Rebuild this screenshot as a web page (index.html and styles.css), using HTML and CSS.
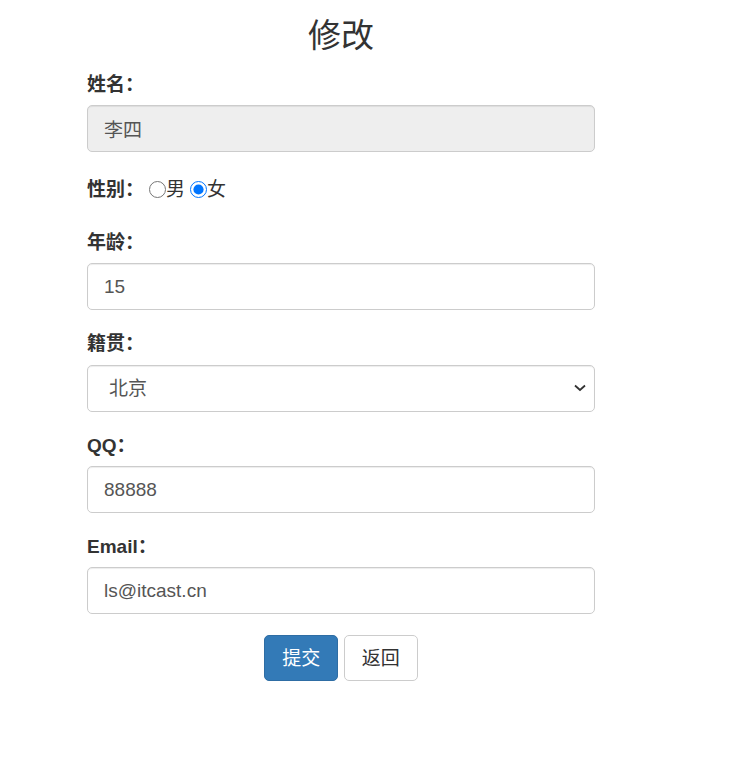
FILE: index.html
```html
<!DOCTYPE html>
<html lang="zh-CN">
  <head>
    <meta charset="UTF-8" />
    <meta name="viewport" content="width=device-width, initial-scale=1.0" />
    <title>修改用户</title>
    <link rel="stylesheet" href="styles.css">
  </head>
  <body>
    <div class="container">
      <h3 class="title">修改</h3>
      <form action="#" method="post">
        <div class="form-group">
          <label for="name">姓名：</label>
          <input type="text" class="form-control" id="name" name="name" value="李四" readonly />
        </div>

        <div class="form-group gender">
          <label>性别：</label><input type="radio" name="gender" value="男" />男<input type="radio" name="gender" value="女" checked />女
        </div>

        <div class="form-group">
          <label for="age">年龄：</label>
          <input type="text" class="form-control" id="age" name="age" value="15" />
        </div>

        <div class="form-group">
          <label for="address">籍贯：</label>
          <div class="select-wrap">
            <select name="address" id="address" class="form-control select">
              <option value="北京" selected>北京</option>
              <option value="上海">上海</option>
              <option value="广州">广州</option>
            </select>
            <!-- dropdown arrow -->
            <svg class="select-arrow" width="12" height="8" viewBox="0 0 12 8">
              <path d="M1 1.5 L6 6 L11 1.5" fill="none" stroke="#333" stroke-width="1.8" />
            </svg>
          </div>
        </div>

        <div class="form-group">
          <label for="qq">QQ：</label>
          <input type="text" class="form-control" id="qq" name="qq" value="88888" />
        </div>

        <div class="form-group">
          <label for="email">Email：</label>
          <input type="text" class="form-control" id="email" name="email" value="ls@itcast.cn" />
        </div>

        <div class="form-group actions">
          <input class="btn btn-primary" type="submit" value="提交" />
          <input class="btn btn-default" type="button" value="返回" />
        </div>
      </form>
    </div>
  </body>
</html>
```

FILE: styles.css
```css
body {
  margin: 0;
  font-family: "Liberation Sans", "Noto Sans CJK SC", sans-serif;
  font-size: 19px;
  line-height: 27px;
  color: #333;
  background-color: #fff;
}
.container {
  width: 508px;
  margin-left: 87px;
}
.title {
  margin: 18px 0 17px;
  font-size: 33px;
  line-height: 36px;
  font-weight: 400;
  text-align: center;
}
.form-group {
  margin-bottom: 20px;
}
label {
  display: inline-block;
  margin-bottom: 7px;
  font-weight: bold;
}
.form-control {
  display: block;
  box-sizing: border-box;
  width: 100%;
  height: 47px;
  padding: 8px 16px;
  font-family: inherit;
  font-size: 19px;
  color: #555;
  background-color: #fff;
  border: 1px solid #ccc;
  border-radius: 5px;
  box-shadow: inset 0 1px 1px rgba(0, 0, 0, 0.075);
}
.form-control[readonly] {
  background-color: #eee;
}
.select-wrap {
  position: relative;
  margin-top: 1px;
}
.select {
  appearance: none;
  -webkit-appearance: none;
  padding-left: 21px;
}
.select-arrow {
  position: absolute;
  right: 9px;
  top: 19px;
  pointer-events: none;
}
.gender {
  padding-top: 4px;
  padding-bottom: 6px;
}
.gender label {
  margin-bottom: 0;
}
.gender input[type="radio"] {
  width: 17px;
  height: 17px;
  margin: 0 0 0 5px;
  vertical-align: -2px;
}
.actions {
  margin-top: 21px;
  text-align: center;
}
.btn {
  display: inline-block;
  height: 46px;
  padding: 8px 17px;
  font-family: inherit;
  font-size: 19px;
  line-height: 27px;
  border: 1px solid transparent;
  border-radius: 5px;
  cursor: pointer;
}
.btn-primary {
  color: #fff;
  background-color: #337ab7;
  border-color: #2e6da4;
}
.btn-default {
  color: #333;
  background-color: #fff;
  border-color: #ccc;
}
```
